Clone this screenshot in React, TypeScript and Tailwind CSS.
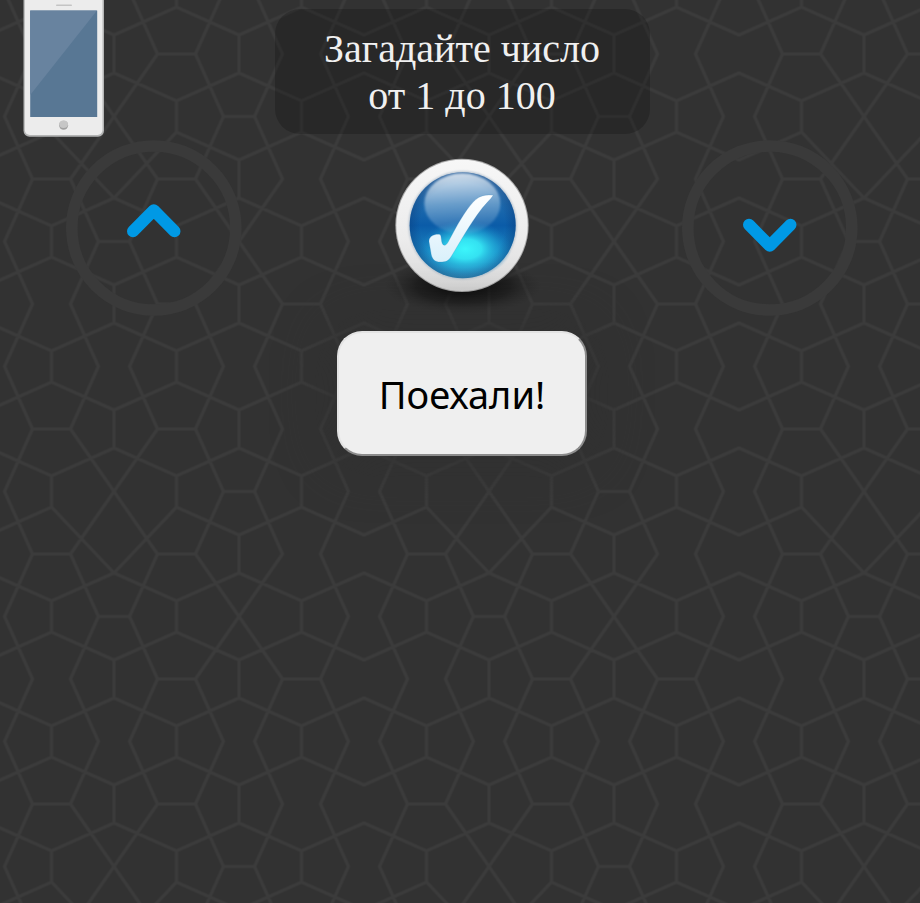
import React from "react";

type CellState = "line" | "gap" | "cross" | "drop";

// One repeat of the backdrop: six by six cells, 62.5 units apart.
// line = bar drawn, gap = bar left out, cross = bar shrunk to a point,
// drop = bar shrunk to its lower end.
const CELLS: CellState[][] = [
  ["line", "cross", "line", "line", "line", "gap"],
  ["line", "drop", "line", "line", "gap", "gap"],
  ["line", "line", "line", "cross", "line", "gap"],
  ["gap", "line", "line", "line", "line", "gap"],
  ["line", "gap", "line", "gap", "line", "gap"],
  ["line", "line", "line", "line", "gap", "gap"],
];

const STEP = 62.5;

function ends(col: number, row: number) {
  const state = CELLS[(row + 6) % 6][(col + 6) % 6];
  const vertical = (col + row + 12) % 2 === 0;
  const half = state === "cross" ? 0 : (row + 6) % 2 === 0 ? 15.6 : 19;
  const x = col * STEP;
  const y = row * STEP;
  if (vertical) {
    return { vertical, state, a: [x, state === "drop" ? y + half : y - half], b: [x, y + half] };
  }
  return { vertical, state, a: [x - half, y], b: [x + half, y] };
}

function latticePath() {
  const parts: string[] = [];
  const add = (p: number[], q: number[]) => parts.push(`M${p[0]} ${p[1]}L${q[0]} ${q[1]}`);
  for (let row = -1; row <= 6; row++) {
    for (let col = -1; col <= 6; col++) {
      const cell = ends(col, row);
      if (cell.state === "line") add(cell.a, cell.b);
      if (cell.vertical) {
        add(cell.b, ends(col - 1, row + 1).a);
        add(cell.b, ends(col + 1, row + 1).a);
      } else {
        add(cell.b, ends(col + 1, row - 1).a);
        add(cell.b, ends(col + 1, row + 1).a);
      }
    }
  }
  return parts.join("");
}

const LATTICE = latticePath();

function Backdrop() {
  return (
    <svg className="absolute inset-0 -z-10 h-full w-full" aria-hidden="true">
      <defs>
        <pattern id="lattice" x="51.5" y="116.5" width="375" height="375" patternUnits="userSpaceOnUse">
          <path d={LATTICE} fill="none" stroke="#3b3b3b" strokeWidth="3.1" strokeLinecap="round" />
        </pattern>
      </defs>
      <rect width="100%" height="100%" fill="url(#lattice)" />
    </svg>
  );
}

function Phone() {
  return (
    <svg className="ml-6 h-[137px] w-20 overflow-visible" viewBox="0 0 80 137" aria-hidden="true">
      <rect x="-0.5" y="-10" width="80.5" height="146.7" rx="6" fill="#b4b5b5" />
      <rect x="0.8" y="-10" width="77.7" height="145" rx="5" fill="#ececec" />
      <rect x="32" y="4.5" width="16" height="1.4" rx="0.7" fill="#c4c4c4" />
      <rect x="6.2" y="10.6" width="67" height="106.4" fill="#587794" />
      <path d="M6.2 10.6H73L6.2 95Z" fill="#68839f" />
      <circle cx="39.6" cy="125.2" r="4.5" fill="#a0a0a0" />
      <ellipse cx="39.6" cy="124.2" rx="4.4" ry="3.7" fill="#c6c6c6" />
    </svg>
  );
}

function ArrowButton({ direction }: { direction: "up" | "down" }) {
  return (
    <button type="button" aria-label={direction === "up" ? "Больше" : "Меньше"} className="rounded-full">
      <svg className="block size-44" viewBox="0 0 176 176" fill="none" aria-hidden="true">
        <circle cx="87.8" cy="88" r="82" stroke="#3a3a3a" strokeWidth="11.6" />
        <path
          d={direction === "up" ? "M67 91.2L87.8 70.2L108.5 91.2" : "M67 84.8L87.8 105.8L108.5 84.8"}
          stroke="#0099e5"
          strokeWidth="12"
          strokeLinecap="round"
          strokeLinejoin="round"
        />
      </svg>
    </button>
  );
}

function CheckButton() {
  return (
    <button type="button" aria-label="Угадал" className="rounded-full">
      <svg className="block size-44 overflow-visible" viewBox="-19 -15 528 528" aria-hidden="true">
        <defs>
          <radialGradient id="shade">
            <stop offset="0" stopColor="#000" stopOpacity="0.9" />
            <stop offset="0.6" stopColor="#0a0a0a" stopOpacity="0.5" />
            <stop offset="1" stopColor="#222" stopOpacity="0" />
          </radialGradient>
          <linearGradient id="rim" x1="0" y1="0" x2="0" y2="1">
            <stop offset="0" stopColor="#f7f7f7" />
            <stop offset="0.6" stopColor="#ececec" />
            <stop offset="1" stopColor="#d9d9d9" />
          </linearGradient>
          <linearGradient id="ball" x1="0" y1="0" x2="0" y2="1">
            <stop offset="0" stopColor="#5c8fc0" />
            <stop offset="0.3" stopColor="#1f6bae" />
            <stop offset="0.5" stopColor="#0b5ca8" />
            <stop offset="0.75" stopColor="#1a84c0" />
            <stop offset="1" stopColor="#3d9fc4" />
          </linearGradient>
          <radialGradient id="edge">
            <stop offset="0.8" stopColor="#0a3a78" stopOpacity="0" />
            <stop offset="1" stopColor="#0a3a78" stopOpacity="0.4" />
          </radialGradient>
          <radialGradient id="glow">
            <stop offset="0" stopColor="#3cf6fb" />
            <stop offset="0.35" stopColor="#35e6f4" stopOpacity="0.95" />
            <stop offset="0.7" stopColor="#22b4e0" stopOpacity="0.5" />
            <stop offset="1" stopColor="#1483c8" stopOpacity="0" />
          </radialGradient>
          <linearGradient id="gloss" x1="0.4" y1="0" x2="0.5" y2="1">
            <stop offset="0" stopColor="#fff" stopOpacity="0.75" />
            <stop offset="0.5" stopColor="#cfe2f2" stopOpacity="0.42" />
            <stop offset="1" stopColor="#b8d4ec" stopOpacity="0.1" />
          </linearGradient>
          <linearGradient id="tick" x1="0" y1="0" x2="0" y2="1">
            <stop offset="0" stopColor="#fff" />
            <stop offset="1" stopColor="#d9f0fb" />
          </linearGradient>
          <filter id="soft">
            <feGaussianBlur stdDeviation="3" />
          </filter>
        </defs>
        <ellipse cx="248" cy="424" rx="235" ry="84" fill="url(#shade)" />
        <circle cx="245" cy="241" r="200" fill="#a9a9a9" />
        <circle cx="245" cy="241" r="197" fill="url(#rim)" />
        <circle cx="247" cy="241" r="162" fill="#b4c0cc" filter="url(#soft)" />
        <circle cx="247" cy="241" r="159" fill="url(#ball)" />
        <circle cx="247" cy="241" r="159" fill="url(#edge)" />
        <ellipse cx="255" cy="312" rx="138" ry="86" fill="url(#glow)" />
        <ellipse cx="246" cy="176" rx="114" ry="91" fill="url(#gloss)" filter="url(#soft)" />
        <path
          d="M146 290C145 276 158 268 174 268C181 268 182 272 183 282C184 294 187 301 193 301C200 301 207 284 218 264C240 224 262 186 287 163C303 150 323 148 339 151C330 164 318 174 302 194C270 235 240 290 213 334C204 349 196 351 180 351C164 351 157 344 153 330Z"
          fill="url(#tick)"
          stroke="#2d7db5"
          strokeOpacity="0.35"
          strokeWidth="2"
        />
      </svg>
    </button>
  );
}

export default function App() {
  return (
    <main className="relative isolate min-h-screen overflow-hidden bg-[#323232]">
      <Backdrop />
      <div className="-mr-1 flex flex-col">
        <header className="grid grid-cols-3">
          <Phone />
          <div className="flex justify-center pt-[9px]">
            <h1 className="flex h-[125px] w-[375px] shrink-0 flex-col items-center justify-center rounded-[25px] bg-black/20 font-['Liberation_Serif',serif] text-[40px] leading-[47px] font-normal whitespace-nowrap text-[#f0f0f0]">
              <span>Загадайте число</span>
              <span>от 1 до 100</span>
            </h1>
          </div>
        </header>
        <div className="mt-[3px] grid grid-cols-3 justify-items-center">
          <ArrowButton direction="up" />
          <CheckButton />
          <ArrowButton direction="down" />
        </div>
        <button
          type="button"
          className="mt-[15px] h-[125px] w-[250px] self-center rounded-[25px] border-2 border-t-[#e3e3e3] border-r-[#8c8c8c] border-b-[#8c8c8c] border-l-[#e3e3e3] bg-[#efefef] pt-0.5 font-['Noto_Sans',sans-serif] text-[38px] text-black shadow-[0_0_50px_8px_#313131]"
        >
          Поехали!
        </button>
      </div>
    </main>
  );
}
